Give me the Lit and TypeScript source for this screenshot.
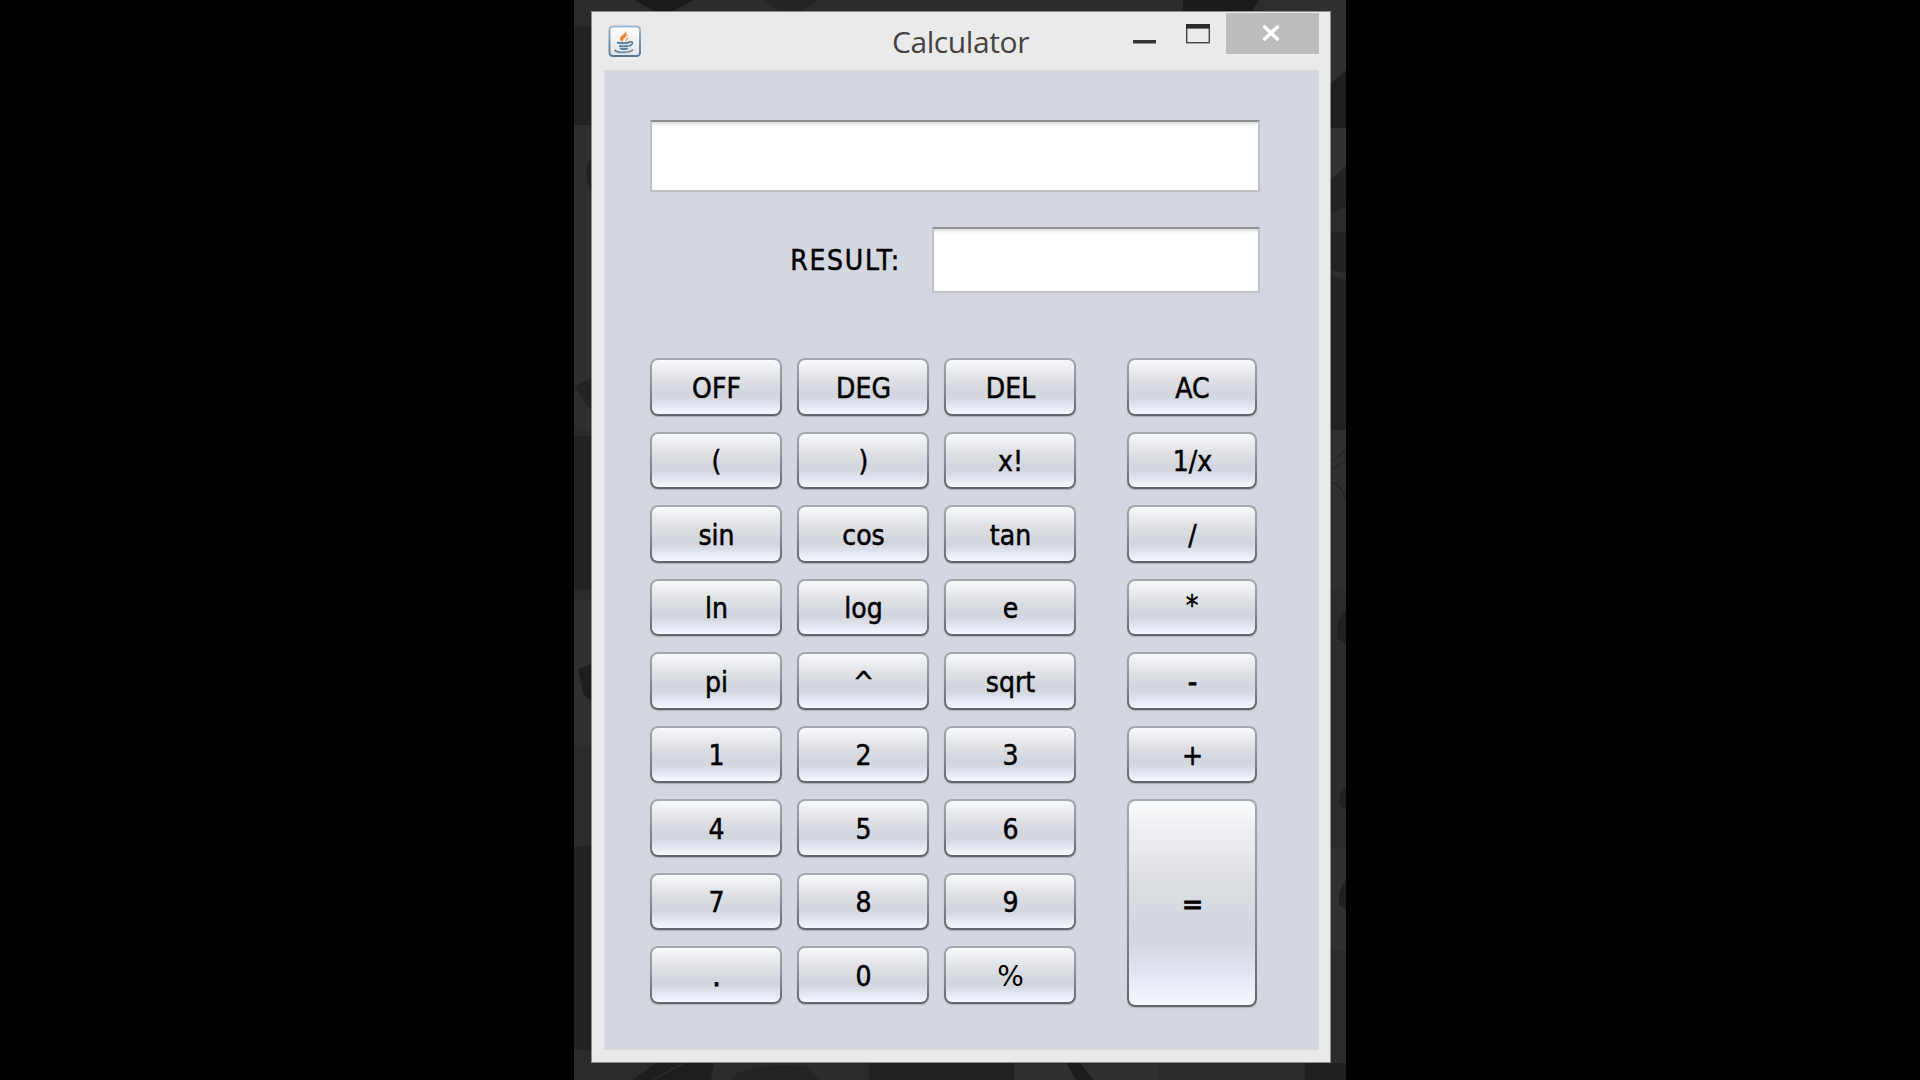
import { LitElement, html, css } from "lit";
import { customElement } from "lit/decorators.js";
import { classMap } from "lit/directives/class-map.js";

const KEYS: string[][] = [
  ["OFF", "DEG", "DEL"],
  ["(", ")", "x!"],
  ["sin", "cos", "tan"],
  ["ln", "log", "e"],
  ["pi", "^", "sqrt"],
  ["1", "2", "3"],
  ["4", "5", "6"],
  ["7", "8", "9"],
  [".", "0", "%"],
];
const OPERATORS = ["AC", "1/x", "/", "*", "-", "+", "="];

@customElement("calc-key")
export class CalcKey extends LitElement {
  static properties = { label: { type: String } };
  declare label: string;

  static styles = css`
    :host { display: block; min-width: 0; }
    .key {
      display: flex;
      align-items: center;
      justify-content: center;
      box-sizing: border-box;
      width: 100%;
      height: 100%;
      margin: 0;
      padding: 4px 0 0 1px;
      border: 2px solid transparent;
      border-radius: 8px;
      background:
        linear-gradient(#f9fafb 0%, #f0f1f4 12%, #dee0e3 37%, #d3d6de 60%, #d4d7df 70%, #e3e7f2 85%, #f5f8ff 100%) padding-box,
        linear-gradient(#a5a9af 0%, #8f949a 45%, #6e727a 85%, #60646c 100%) border-box;
      box-shadow: 0 1px 1px rgba(100, 106, 120, 0.35);
      color: #000;
      font: 28px/34px "DejaVu Sans Condensed", "DejaVu Sans", sans-serif;
      font-stretch: condensed;
      -webkit-text-stroke: 0.5px #000;
    }
    .strong { -webkit-text-stroke-width: 1px; }
    .thin { font-family: "DejaVu Sans", sans-serif; font-stretch: normal; -webkit-text-stroke-width: 0; }
    .raised { padding: 0 0 3px; }
  `;

  render() {
    const cls = classMap({
      key: true,
      strong: ["=", "-", "."].includes(this.label),
      thin: this.label === "%",
      raised: this.label === "*",
    });
    return html`<button class=${cls}>${this.label}</button>`;
  }
}

@customElement("app-root")
export class AppRoot extends LitElement {
  static styles = css`
    :host { display: block; }
    .screen {
      display: flex;
      justify-content: center;
      width: 1920px;
      height: 1080px;
      overflow: hidden;
      background: #000;
    }
    .desktop {
      position: relative;
      box-sizing: border-box;
      width: 772px;
      height: 1080px;
      padding: 11px 14px 17px 17px;
      background: #2b2b2b;
    }
    .wallpaper { position: absolute; left: 0; top: 0; }
    .window {
      position: relative;
      box-sizing: border-box;
      display: flex;
      flex-direction: column;
      width: 740px;
      height: 1052px;
      border: 1px solid #8c8c8c;
      background: #eaeaea;
      padding: 0 11px 12px 12px;
    }
    .titlebar {
      display: grid;
      grid-template-columns: 1fr auto 1fr;
      height: 58px;
      flex: none;
    }
    .appicon { margin: 13px 0 0 4px; width: 33px; height: 32px; }
    .title {
      margin-top: 10px;
      padding-right: 2px;
      color: #444;
      font: 30px/40px "Open Sans", "Noto Sans", sans-serif;
      letter-spacing: -0.4px;
    }
    .controls { display: flex; justify-content: flex-end; }
    .close {
      display: flex;
      align-items: center;
      justify-content: center;
      box-sizing: border-box;
      width: 93px;
      height: 41px;
      margin-top: 1px;
      padding: 0 3px 2px 0;
      background: #bcbcbc;
    }
    .client {
      flex: 1;
      box-sizing: border-box;
      padding: 49px 0 0 45px;
      border: 1px solid #dcdcdf;
      background: #d4d7df;
    }
    .field {
      box-sizing: border-box;
      border: 2px solid #c0c1c4;
      border-top-color: #8f9196;
      background: linear-gradient(#dcdcdc 0, #f6f6f6 3px, #fff 6px);
    }
    .expression { width: 610px; height: 72px; }
    .resultrow {
      display: flex;
      align-items: center;
      justify-content: flex-end;
      width: 610px;
      height: 66px;
      margin-top: 35px;
      gap: 31px;
    }
    .caption {
      padding-top: 2px;
      color: #000;
      font: 28px/34px "DejaVu Sans Condensed", "DejaVu Sans", sans-serif;
      font-stretch: condensed;
      letter-spacing: 1.7px;
      -webkit-text-stroke: 0.5px #000;
    }
    .result { width: 328px; height: 66px; }
    .pad { display: flex; gap: 51px; margin-top: 65px; }
    .keys {
      display: grid;
      grid-template-columns: repeat(3, 132px);
      grid-auto-rows: 57.5px;
      gap: 16px 15px;
    }
    .ops {
      display: grid;
      grid-template-columns: 130px;
      grid-template-rows: repeat(6, 57.5px) 208px;
      gap: 16px;
    }
  `;

  render() {
    return html`
      <div class="screen">
        <div class="desktop">
          <svg class="wallpaper" width="772" height="1080" viewBox="0 0 772 1080">
            <rect width="772" height="1080" fill="#2b2b2b" />
            <path d="M0 26H18V125H0z" fill="#232323" />
            <path d="M0 125H18V430H0z" fill="#2e2e2e" />
            <path d="M18 160Q11 163 13 180L18 196z" fill="#222" />
            <path d="M0 386L18 378V412z" fill="#232323" />
            <path d="M0 436H18V590H0z" fill="#232323" />
            <path d="M0 600H18V745H0z" fill="#303030" />
            <path d="M4 669L18 664V702L9 694z" fill="#1e1e1e" />
            <path d="M0 846H18V1050H0z" fill="#222" />
            <path d="M60 0H120L98 11H80z" fill="#191919" />
            <path d="M190 0H245L226 11H205z" fill="#242424" />
            <path d="M609 0H685L678 11H609z" fill="#1a1a1a" />
            <path d="M690 0H772V11H690z" fill="#303030" />
            <path d="M757 0H772V72L757 84z" fill="#303030" />
            <path d="M757 84L772 70V128H757z" fill="#1e1e1e" />
            <path d="M757 128H772V165L757 180z" fill="#323232" />
            <path d="M757 180L772 166V206L757 214z" fill="#222" />
            <path d="M757 232H772V430H757z" fill="#222" />
            <path d="M757 270L772 273V280L757 276z" fill="#2d2d2d" />
            <path d="M757 430H772V590H757z" fill="#2f2f2f" />
            <path d="M757 462L772 450M757 470L772 460M757 482Q768 484 772 500" stroke="#1f1f1f" fill="none" />
            <path d="M772 610Q762 618 763 638L772 644z" fill="#202020" />
            <path d="M757 848H772V950H757z" fill="#303030" />
            <path d="M772 787Q764 792 766 805L772 810zM772 880Q764 887 765 905L772 910z" fill="#202020" />
            <path d="M731 1063H772V1080H731z" fill="#202020" />
            <path d="M58 1080L84 1062H140L137 1080z" fill="#1e1e1e" />
            <path d="M78 1080L112 1062" stroke="#333" fill="none" />
            <path d="M155 1080Q170 1062 232 1066L246 1080z" fill="#242424" />
            <path d="M295 1063H440V1080H295z" fill="#222" />
            <path d="M440 1063H585V1080H440z" fill="#303030" />
            <path d="M492 1063H506L520 1080H502z" fill="#1c1c1c" />
          </svg>
          <div class="window">
            <div class="titlebar">
              <svg class="appicon" viewBox="0 0 33 32">
                <defs>
                  <linearGradient id="frame" x1="0" y1="0" x2="0" y2="1">
                    <stop offset="0" stop-color="#9bb8cf" />
                    <stop offset="1" stop-color="#557793" />
                  </linearGradient>
                  <linearGradient id="face" x1="0" y1="0" x2="0" y2="1">
                    <stop offset="0" stop-color="#fff" />
                    <stop offset="1" stop-color="#e4e4e4" />
                  </linearGradient>
                </defs>
                <rect x="1.5" y="1.5" width="30.5" height="29.5" rx="3.5" fill="url(#face)" stroke="url(#frame)" stroke-width="2" />
                <path d="M17.5 5.5C18.5 9 11.5 10.5 12 14C12.2 15.5 13.5 16.8 15 16.8C14.2 14.5 16 13.5 17.2 12.5C19 11 19 8 17.5 5.5z" fill="#f0862e" />
                <path d="M18.5 10.5C21.3 9.8 21 12.2 18 13.7C17 14.5 18.5 15 17 16.8C20.5 15 20.5 12.5 20 11z" fill="#f59a4a" />
                <path d="M9 17.5Q16 19.2 22 17M11 21Q16 22 20.5 20.6M12 23.6Q16 24.6 20 23.4" fill="none" stroke="#56809f" stroke-width="1.9" />
                <path d="M21.5 17Q26 16 24 19Q23 20.5 21 21" fill="none" stroke="#56809f" stroke-width="1.6" />
                <path d="M6.5 25Q9 27.8 16 27.3Q23 27 25 24.5" fill="none" stroke="#6d90ab" stroke-width="2" />
              </svg>
              <div class="title">Calculator</div>
              <div class="controls">
                <svg width="93" height="42" viewBox="1 0 93 42">
                  <rect x="1" y="28" width="23" height="3.5" fill="#333" />
                  <rect x="54.7" y="12.7" width="22.6" height="18" fill="none" stroke="#444" stroke-width="1.4" />
                  <rect x="54" y="12" width="24" height="4.6" fill="#2c2c2c" />
                </svg>
                <div class="close">
                  <svg width="20" height="16" viewBox="0 0 20 16">
                    <path d="M2.5 1L17.5 15M17.5 1L2.5 15" stroke="#fff" stroke-width="3.4" />
                  </svg>
                </div>
              </div>
            </div>
            <div class="client">
              <div class="field expression"></div>
              <div class="resultrow">
                <span class="caption">RESULT:</span>
                <div class="field result"></div>
              </div>
              <div class="pad">
                <div class="keys">
                  ${KEYS.flat().map((k) => html`<calc-key .label=${k}></calc-key>`)}
                </div>
                <div class="ops">
                  ${OPERATORS.map((k) => html`<calc-key .label=${k}></calc-key>`)}
                </div>
              </div>
            </div>
          </div>
        </div>
      </div>
    `;
  }
}
